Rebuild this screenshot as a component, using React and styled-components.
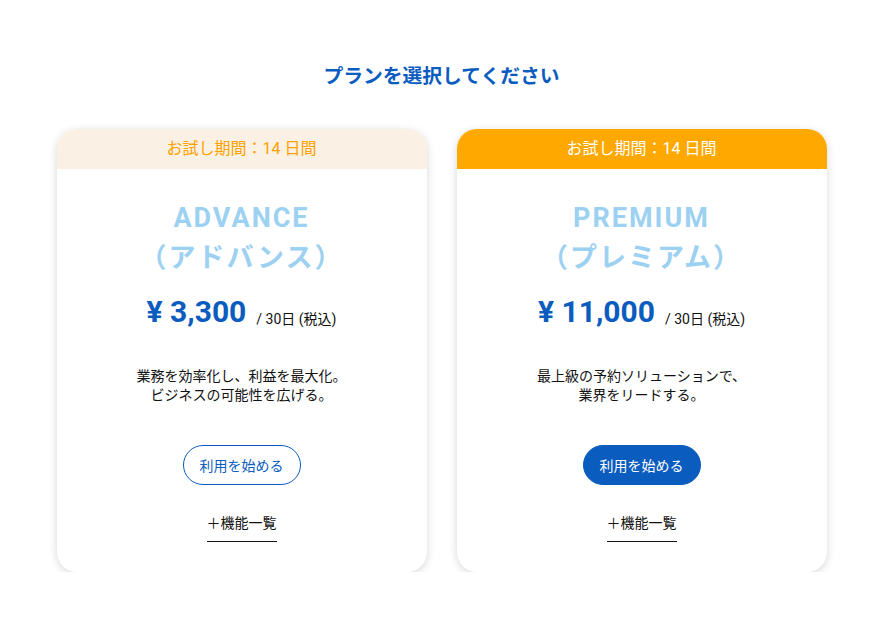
import React from 'react';
import styled, { createGlobalStyle } from 'styled-components';

const GlobalStyle = createGlobalStyle`
    body {
        margin: 0;
        background: #fff;
        font-family: Roboto, "Noto Sans CJK JP", sans-serif;
        color: #111;
    }
`

const plans = [
    {
        id: 'advance',
        name: 'ADVANCE',
        kana: '（アドバンス）',
        price: '¥ 3,300',
        desc: ['業務を効率化し、利益を最大化。', 'ビジネスの可能性を広げる。'],
        featured: false
    },
    {
        id: 'premium',
        name: 'PREMIUM',
        kana: '（プレミアム）',
        price: '¥ 11,000',
        desc: ['最上級の予約ソリューションで、', '業界をリードする。'],
        featured: true
    }
]

const App = () => {
    return (
        <>
            <GlobalStyle />
            <Page>
                <Heading>プランを選択してください</Heading>
                <Cards>
                    {plans.map(plan => (
                        <Card key={plan.id}>
                            <Trial featured={plan.featured}>お試し期間：14 日間</Trial>
                            <Body>
                                <PlanName>
                                    {plan.name}
                                    <br />
                                    {plan.kana}
                                </PlanName>
                                <PriceRow>
                                    <Price>{plan.price}</Price>
                                    <Per>/ 30日 (税込)</Per>
                                </PriceRow>
                                <Desc>
                                    {plan.desc.map(line => (
                                        <div key={line}>{line}</div>
                                    ))}
                                </Desc>
                                <StartButton featured={plan.featured}>利用を始める</StartButton>
                                <FeatureLink>＋機能一覧</FeatureLink>
                            </Body>
                        </Card>
                    ))}
                </Cards>
            </Page>
        </>
    );
};

export default App;

const Page = styled.div`
    display: flex;
    flex-direction: column;
    align-items: center;
    padding-top: 63px;
`

const Heading = styled.h1`
    margin: 0;
    font-size: 19.8px;
    line-height: 28px;
    font-weight: 700;
    color: #0a5cbf;
`

const Cards = styled.div`
    display: flex;
    gap: 30px;
    margin-top: 38px;
`

const Card = styled.div`
    width: 370px;
    height: 443px;
    border-radius: 20px;
    background: #fff;
    box-shadow: 0 2px 8px rgba(0, 0, 0, 0.16);
    overflow: hidden;
    display: flex;
    flex-direction: column;
`

const Trial = styled.div`
    height: 40px;
    box-sizing: border-box;
    padding-bottom: 4px;
    display: flex;
    align-items: center;
    justify-content: center;
    font-size: 16px;
    background: ${p => p.featured ? '#ffa800' : '#faf0e3'};
    color: ${p => p.featured ? '#fff' : '#ffa200'};
`

const Body = styled.div`
    display: flex;
    flex-direction: column;
    align-items: center;
    padding-top: 29px;
`

const PlanName = styled.div`
    font-size: 27px;
    line-height: 40px;
    font-weight: 700;
    letter-spacing: 2px;
    color: #9dd1f2;
    text-align: center;
`

const PriceRow = styled.div`
    display: flex;
    align-items: baseline;
    gap: 10px;
    margin-top: 14px;
`

const Price = styled.div`
    font-size: 30px;
    line-height: 40px;
    font-weight: 700;
    color: #0a5cbf;
`

const Per = styled.div`
    font-size: 14px;
    position: relative;
    top: 2px;
    color: #111;
`

const Desc = styled.div`
    margin-top: 35px;
    font-size: 14px;
    line-height: 19px;
    text-align: center;
    color: #111;
`

const StartButton = styled.button`
    margin-top: 40px;
    width: 118px;
    height: 40px;
    border-radius: 20px;
    border: 1px solid #0a5cbf;
    background: ${p => p.featured ? '#0a5cbf' : '#fff'};
    color: ${p => p.featured ? '#fff' : '#0a5cbf'};
    font-family: inherit;
    font-size: 14px;
    cursor: pointer;
`

const FeatureLink = styled.div`
    margin-top: 28px;
    width: 70px;
    font-size: 14px;
    line-height: 20px;
    text-align: center;
    padding-bottom: 8px;
    border-bottom: 1px solid #111;
    color: #111;
`
